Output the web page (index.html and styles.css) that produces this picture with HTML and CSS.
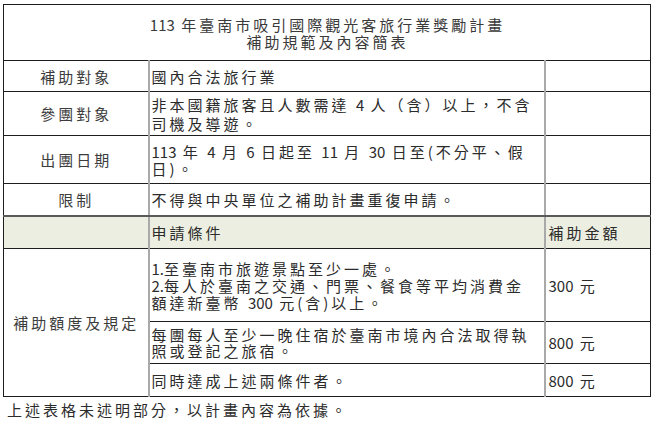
FILE: index.html
```html
<!DOCTYPE html>
<html lang="zh-Hant">
<head>
<meta charset="utf-8">
<title>113 年臺南市吸引國際觀光客旅行業獎勵計畫 補助規範及內容簡表</title>
<link rel="stylesheet" href="styles.css">
</head>
<body>
<table class="grid">
  <colgroup>
    <col class="c-label">
    <col class="c-main">
    <col class="c-amount">
  </colgroup>
  <tr class="row-title">
    <td class="title" colspan="3"><span class="num">113</span> 年臺南市吸引國際觀光客旅行業獎勵計畫<br>補助規範及內容簡表</td>
  </tr>
  <tr class="row-a">
    <td class="label">補助對象</td>
    <td class="text">國內合法旅行業</td>
    <td class="amount"></td>
  </tr>
  <tr class="row-b">
    <td class="label">參團對象</td>
    <td class="text lh-wide">非本國籍旅客且人數需達 <span class="num">4</span> 人（含）以上，不含<br>司機及導遊。</td>
    <td class="amount"></td>
  </tr>
  <tr class="row-c">
    <td class="label">出團日期</td>
    <td class="text"><span class="num">113</span> 年 <span class="num">4</span> 月 <span class="num">6</span> 日起至 <span class="num">11</span> 月 <span class="num">30</span> 日至(不分平、假<br>日)。</td>
    <td class="amount"></td>
  </tr>
  <tr class="row-d">
    <td class="label">限制</td>
    <td class="text">不得與中央單位之補助計畫重復申請。</td>
    <td class="amount"></td>
  </tr>
  <tr class="row-head">
    <td class="label"></td>
    <td class="text">申請條件</td>
    <td class="amount">補助金額</td>
  </tr>
  <tr class="row-s1">
    <td class="label" rowspan="3">補助額度及規定</td>
    <td class="text"><span class="num">1.</span>至臺南市旅遊景點至少一處。<br><span class="num">2.</span>每人於臺南之交通、門票、餐食等平均消費金<br>額達新臺幣 <span class="num">300</span> 元(含)以上。</td>
    <td class="amount"><span class="num">300</span> 元</td>
  </tr>
  <tr class="row-s2">
    <td class="text lh-tight">每團每人至少一晚住宿於臺南市境內合法取得執<br>照或登記之旅宿。</td>
    <td class="amount"><span class="num">800</span> 元</td>
  </tr>
  <tr class="row-s3">
    <td class="text">同時達成上述兩條件者。</td>
    <td class="amount"><span class="num">800</span> 元</td>
  </tr>
</table>
<p class="note">上述表格未述明部分，以計畫內容為依據。</p>
</body>
</html>
```

FILE: styles.css
```css
html, body {
  margin: 0;
  background: #ffffff;
}

body {
  padding: 4px 0 0 3px;
  font-family: "Noto Sans CJK TC", "Noto Sans CJK SC", sans-serif;
  font-size: 15px;
  letter-spacing: 3px;
  color: #2b2b2b;
}

.num {
  letter-spacing: 0;
}

.grid {
  border-collapse: collapse;
  table-layout: fixed;
  width: 647px;
  border: 1px solid #1e1e1e;
}

.c-label { width: 145px; }
.c-main { width: 396px; }
.c-amount { width: 106px; }

.grid td {
  padding: 0 1px 0 2px;
  line-height: 17px;
  vertical-align: middle;
  border-top: 1px solid #1e1e1e;
  border-bottom: 1px solid #1e1e1e;
  border-left: 2px solid #a9a9a9;
  border-right: 2px solid #a9a9a9;
  white-space: nowrap;
}

.grid td.title {
  text-align: center;
  color: #3a3a3a;
  border-left: 1px solid #1e1e1e;
  border-right: 1px solid #1e1e1e;
}

.grid td.label {
  text-align: center;
  color: #3c3c3c;
  border-left: 1px solid #1e1e1e;
}

.grid td.amount {
  padding-left: 3px;
  border-right: 1px solid #1e1e1e;
}

.grid td.lh-wide { line-height: 19px; }
.grid td.lh-tight { line-height: 16px; }

.row-title { height: 56px; }
.row-a { height: 31px; }
.row-b { height: 44px; }
.row-c { height: 48px; }
.row-d { height: 32px; }
.row-head { height: 33px; }
.row-s1 { height: 73px; }
.row-s2 { height: 42px; }
.row-s3 { height: 33px; }

.row-d td {
  border-bottom: 2px solid #5a5a5a;
}

.row-head td {
  background: #ebeee0;
}

.note {
  margin: 4px 0 0 0;
  padding-left: 4px;
  line-height: 18px;
  color: #2b2b2b;
}
```
